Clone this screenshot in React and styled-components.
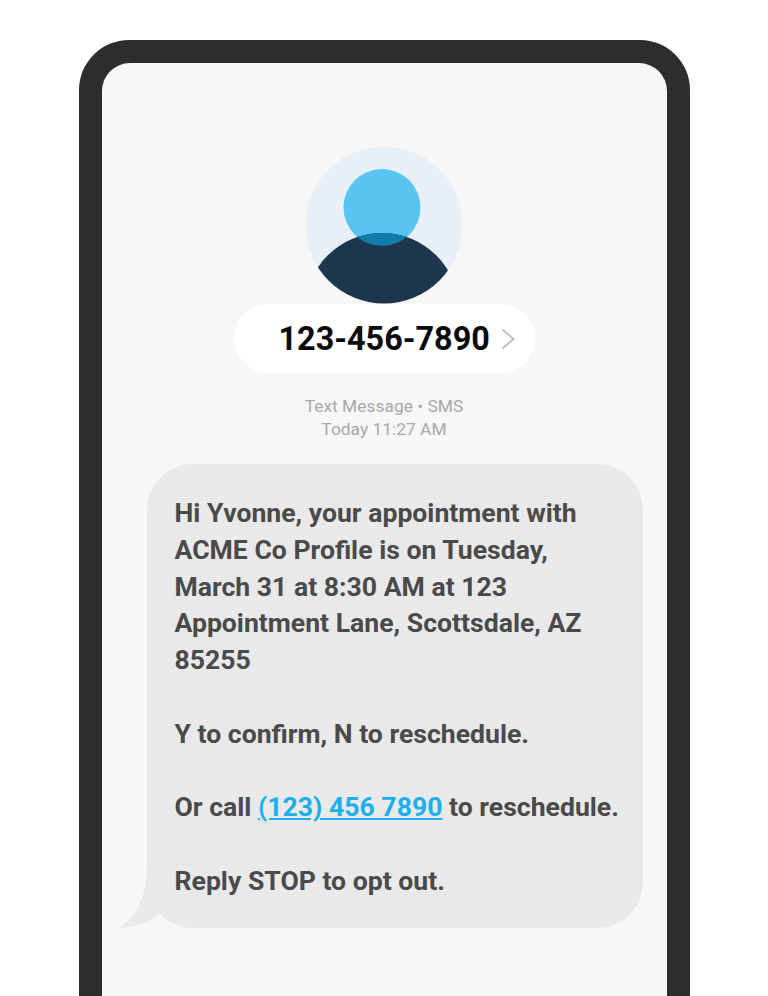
import React from 'react';
import styled, { createGlobalStyle } from 'styled-components';

const GlobalStyle = createGlobalStyle`
  html, body {
    margin: 0;
    padding: 0;
    background: #ffffff;
  }
`;

const Page = styled.div`
  width: 768px;
  height: 996px;
  overflow: hidden;
  padding: 40px 78px 0 79px;
  box-sizing: border-box;
  font-family: Roboto, "Liberation Sans", sans-serif;
`;

const Phone = styled.div`
  height: 1000px;
  box-sizing: border-box;
  background: #2d2d2d;
  border-radius: 50px 50px 0 0;
  padding: 23px 23px 0;
`;

const Screen = styled.div`
  height: 100%;
  box-sizing: border-box;
  background: #f7f7f7;
  border-radius: 28px 28px 0 0;
  padding: 83px 24px 0 23px;
  display: flex;
  flex-direction: column;
  align-items: center;
`;

const Avatar = styled.svg`
  display: block;
  width: 158px;
  height: 158px;
  flex: none;
`;

const ContactPill = styled.div`
  width: 301px;
  height: 69px;
  box-sizing: border-box;
  padding-left: 45px;
  background: #ffffff;
  border-radius: 35px;
  display: flex;
  align-items: center;
  gap: 11px;
  flex: none;
`;

const ContactNumber = styled.span`
  font-size: 32.4px;
  font-weight: 700;
  color: #0a0a0a;
  white-space: nowrap;
`;

const Meta = styled.div`
  margin-top: 22px;
  font-size: 17.4px;
  line-height: 23px;
  color: #a8a8a8;
  text-align: center;
`;

const Bubble = styled.div`
  position: relative;
  align-self: stretch;
  height: 464px;
  margin: 23px 0 0 22px;
  box-sizing: border-box;
  padding: 31px 20px 0 27.5px;
  background: #e9e9e9;
  border-radius: 46px;
  font-size: 26.6px;
  font-weight: 700;
  line-height: 36.8px;
  color: #4a4a4a;
`;

const Tail = styled.svg`
  position: absolute;
  left: -29px;
  bottom: 0;
  width: 60px;
  height: 64px;
`;

const Paragraph = styled.p`
  position: relative;
  margin: 0 0 36.8px;
  white-space: nowrap;
`;

const PhoneLink = styled.a`
  color: #1bb0ec;
  text-decoration: underline;
`;

const App = () => (
  <Page>
    <GlobalStyle />
    <Phone>
      <Screen>
        <Avatar viewBox="0 0 158 158">
          <defs>
            <clipPath id="avatar-clip">
              <circle cx="79" cy="79" r="78.5" />
            </clipPath>
            <clipPath id="head-clip">
              <circle cx="77" cy="61.5" r="38.5" />
            </clipPath>
          </defs>
          <circle cx="79" cy="79" r="78.5" fill="#e9eff6" />
          <circle cx="77" cy="61.5" r="38.5" fill="#58c5f0" />
          <g clipPath="url(#avatar-clip)">
            <circle cx="77" cy="164" r="77" fill="#1f364f" />
            <circle cx="77" cy="164" r="77" fill="#117dad" clipPath="url(#head-clip)" />
          </g>
        </Avatar>
        <ContactPill>
          <ContactNumber>123-456-7890</ContactNumber>
          <svg width="14" height="22" viewBox="0 0 14 22" fill="none">
            <path d="M1.5 1.5 L12.5 11 L1.5 20.5" stroke="#bdbdbd" strokeWidth="2" />
          </svg>
        </ContactPill>
        <Meta>
          Text Message • SMS
          <br />
          Today 11:27 AM
        </Meta>
        <Bubble>
          <Tail viewBox="0 0 60 64">
            <path d="M29 0 C29 30 20 54 0 64 C18 63 32 59 44 47 L60 30 L60 0 Z" fill="#e9e9e9" />
          </Tail>
          <Paragraph>
            Hi Yvonne, your appointment with
            <br />
            ACME Co Profile is on Tuesday,
            <br />
            March 31 at 8:30 AM at 123
            <br />
            Appointment Lane, Scottsdale, AZ
            <br />
            85255
          </Paragraph>
          <Paragraph>Y to confirm, N to reschedule.</Paragraph>
          <Paragraph>
            Or call <PhoneLink href="#">(123) 456 7890</PhoneLink> to reschedule.
          </Paragraph>
          <Paragraph>Reply STOP to opt out.</Paragraph>
        </Bubble>
      </Screen>
    </Phone>
  </Page>
);

export default App;
